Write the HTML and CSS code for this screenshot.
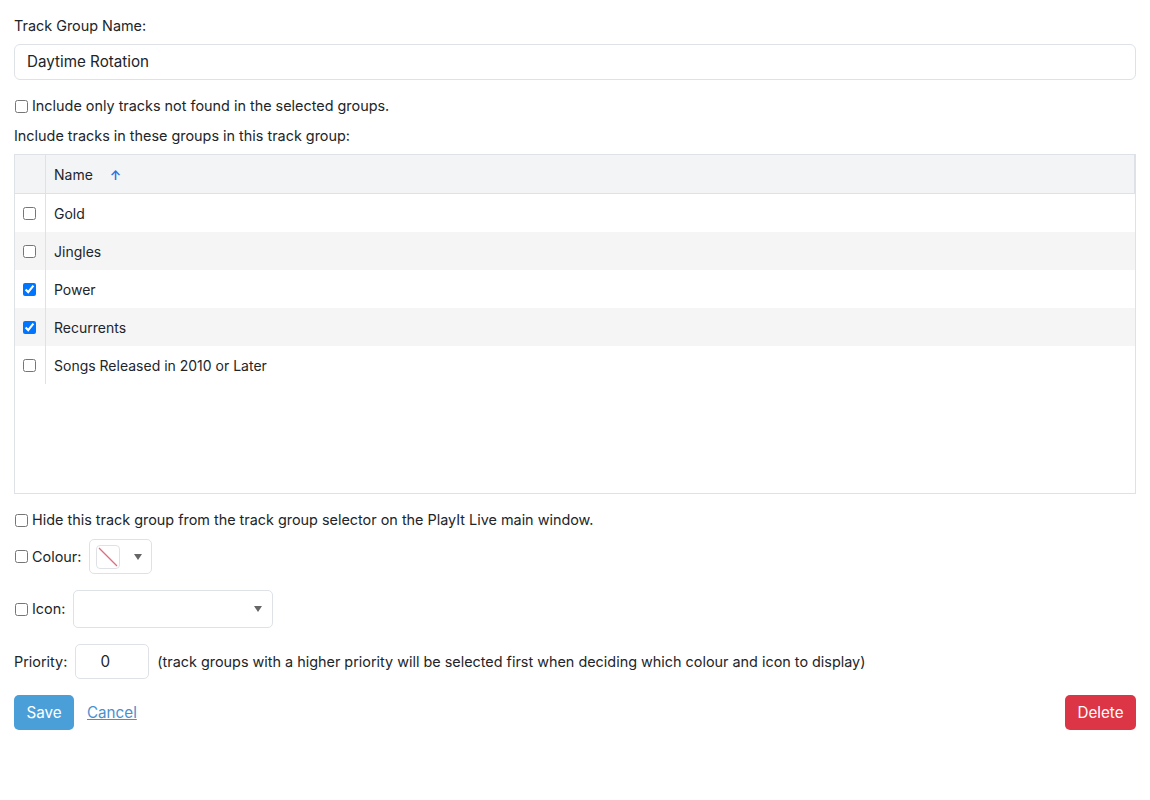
FILE: index.html
```html
<!DOCTYPE html>
<html lang="en">
<head>
    <meta charset="UTF-8">
    <title>Edit Track Group</title>
    <link rel="stylesheet" href="styles.css">
</head>
<body>
    <form class="group-form">
        <label class="field-label" for="group-name">Track Group Name:</label>
        <input type="text" id="group-name" class="text-input" value="Daytime Rotation">

        <label class="check-row"><input type="checkbox"> Include only tracks not found in the selected groups.</label>

        <div class="field-label">Include tracks in these groups in this track group:</div>

        <div class="grid-box">
            <table class="groups-table">
                <thead>
                    <tr>
                        <th class="col-check"></th>
                        <th>Name <span class="sort-arrow">&#8593;</span></th>
                    </tr>
                </thead>
                <tbody>
                    <tr><td class="col-check"><input type="checkbox"></td><td>Gold</td></tr>
                    <tr><td class="col-check"><input type="checkbox"></td><td>Jingles</td></tr>
                    <tr><td class="col-check"><input type="checkbox" checked></td><td>Power</td></tr>
                    <tr><td class="col-check"><input type="checkbox" checked></td><td>Recurrents</td></tr>
                    <tr><td class="col-check"><input type="checkbox"></td><td>Songs Released in 2010 or Later</td></tr>
                </tbody>
            </table>
        </div>

        <label class="check-row hide-row"><input type="checkbox"> Hide this track group from the track group selector on the PlayIt Live main window.</label>

        <div class="inline-row">
            <label class="check-row"><input type="checkbox"> Colour:</label>
            <button type="button" class="colour-picker">
                <span class="swatch">
                    <svg width="22" height="22" viewBox="0 0 22 22">
                        <line x1="2" y1="2" x2="20" y2="20" stroke="#e06c7c" stroke-width="1.2"/>
                    </svg>
                </span>
                <span class="caret"></span>
            </button>
        </div>

        <div class="inline-row">
            <label class="check-row"><input type="checkbox"> Icon:</label>
            <div class="icon-select"><span class="caret"></span></div>
        </div>

        <div class="inline-row priority-row">
            <span>Priority:</span>
            <input type="text" class="priority-input" value="0">
            <span>(track groups with a higher priority will be selected first when deciding which colour and icon to display)</span>
        </div>

        <div class="actions">
            <button type="button" class="btn btn-save">Save</button>
            <a href="#" class="cancel-link">Cancel</a>
            <button type="button" class="btn btn-delete">Delete</button>
        </div>
    </form>
</body>
</html>
```

FILE: styles.css
```css
body {
    margin: 0;
    padding: 16px 14px;
    font-family: Inter, "Noto Sans", sans-serif;
    font-size: 14.4px;
    color: #212529;
    background: #fff;
}

.group-form {
    display: flex;
    flex-direction: column;
}

.field-label { line-height: 20px; }

.text-input {
    margin-top: 8px;
    height: 36px;
    box-sizing: border-box;
    padding: 0 12px 2px;
    border: 1px solid #dee2e6;
    border-radius: 6px;
    font-family: inherit;
    font-size: 15.2px;
    color: #212529;
}

.check-row {
    display: flex;
    align-items: center;
    gap: 4px;
    line-height: 20px;
}
.check-row input { margin: 0 0 0 1px; width: 13px; height: 13px; }

.group-form > .check-row { margin-top: 16px; }
.group-form > .field-label + .grid-box { margin-top: 8px; }
.group-form > .check-row + .field-label { margin-top: 10px; }

.grid-box {
    height: 340px;
    border: 1px solid #dee2e6;
    box-sizing: border-box;
}

.groups-table {
    width: 100%;
    border-collapse: collapse;
    font-size: 14px;
}
.groups-table th {
    background: #f3f4f6;
    font-weight: normal;
    text-align: left;
    height: 38px;
    padding: 0 8px;
    border-bottom: 1px solid #dee2e6;
    border-right: 1px solid #dee2e6;
}
.groups-table td {
    height: 38px;
    padding: 0 8px;
}
.groups-table .col-check {
    width: 14px;
    padding: 0 8px;
    border-right: 1px solid #dee2e6;
}
.groups-table td.col-check input { margin: 0; display: block; width: 13px; height: 13px; }
.groups-table tbody tr:nth-child(even) { background: #f5f5f6; }

.sort-arrow {
    color: #2f6fe0;
    font-size: 13px;
    font-weight: 600;
    margin-left: 13px;
}

.hide-row { margin-top: 18px; }

.inline-row {
    display: flex;
    align-items: center;
    gap: 8px;
}
.hide-row + .inline-row { margin-top: 9px; }
.inline-row + .inline-row { margin-top: 16px; }

.colour-picker {
    display: flex;
    align-items: center;
    gap: 14px;
    width: 63px;
    height: 35px;
    padding: 0 6px;
    background: #fff;
    border: 1px solid #dee2e6;
    border-radius: 5px;
}
.swatch {
    display: block;
    width: 22px;
    height: 22px;
    border: 1px solid #dee2e6;
    border-radius: 4px;
    overflow: hidden;
}
.swatch svg { display: block; }

.caret {
    display: block;
    width: 0;
    height: 0;
    border-left: 4px solid transparent;
    border-right: 4px solid transparent;
    border-top: 6px solid #666;
}

.icon-select {
    display: flex;
    align-items: center;
    justify-content: flex-end;
    width: 200px;
    height: 38px;
    box-sizing: border-box;
    padding-right: 10px;
    border: 1px solid #dee2e6;
    border-radius: 5px;
}

.priority-row { gap: 8px; }
.priority-input {
    width: 74px;
    height: 35px;
    box-sizing: border-box;
    padding: 0 14px 0 0;
    border: 1px solid #dee2e6;
    border-radius: 5px;
    text-align: center;
    font-family: inherit;
    font-size: 15.2px;
    color: #212529;
}

.actions {
    display: flex;
    align-items: center;
    margin-top: 16px;
}
.btn {
    height: 35px;
    padding: 0 12px;
    border: none;
    border-radius: 5px;
    color: #fff;
    font-family: inherit;
    font-size: 15.2px;
}
.btn-save { background: #4b9fd8; width: 60px; }
.cancel-link {
    margin-left: 13px;
    color: #4a90d0;
    font-size: 15.2px;
}
.btn-delete { background: #dc3545; margin-left: auto; width: 71px; }
```
